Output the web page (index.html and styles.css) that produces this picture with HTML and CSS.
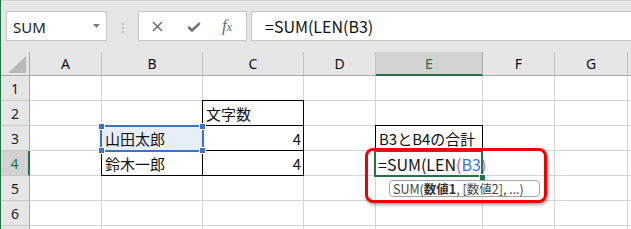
FILE: index.html
```html
<!DOCTYPE html>
<html lang="ja">
<head>
<meta charset="utf-8">
<title>Excel SUM LEN</title>
<link rel="stylesheet" href="styles.css">
</head>
<body>
<div class="app">
  <div class="toolbar">
    <div class="namebox">
      <span class="name">SUM</span>
      <svg class="dd" width="7" height="4" viewBox="0 0 7 4"><path d="M0 0 H7 L3.5 4 Z" fill="#7a7a7a"/></svg>
    </div>
    <div class="grip"><i></i><i></i><i></i></div>
    <div class="fbtns">
      <svg class="ic-x" width="11" height="11" viewBox="0 0 11 11"><path d="M1 1 L10 10 M10 1 L1 10" stroke="#6e6e6e" stroke-width="1.5" fill="none"/></svg>
      <svg class="ic-ok" width="14" height="10" viewBox="0 0 14 10"><path d="M1.2 5 L5 8.5 L12.8 1.2" stroke="#6e6e6e" stroke-width="2.4" fill="none"/></svg>
      <span class="fx"><i>f</i><em>x</em></span>
    </div>
    <div class="fbar">=SUM(LEN(B3)</div>
  </div>
  <div class="sheet">
    <div class="grid">
      <div class="ch corner"><svg width="18" height="17" viewBox="0 0 18 17"><path d="M18 0 V17 H0 Z" fill="#b9b9b9"/></svg></div>
      <div class="ch">A</div><div class="ch">B</div><div class="ch">C</div><div class="ch">D</div>
      <div class="ch on">E</div><div class="ch">F</div><div class="ch">G</div><div class="ch last"></div>

      <div class="rh">1</div><div class="c"></div><div class="c"></div><div class="c"></div><div class="c"></div><div class="c"></div><div class="c"></div><div class="c"></div><div class="c last"></div>

      <div class="rh">2</div><div class="c"></div><div class="c"></div><div class="c bd">文字数</div><div class="c"></div><div class="c"></div><div class="c"></div><div class="c"></div><div class="c last"></div>

      <div class="rh">3</div><div class="c"></div>
      <div class="c bd sel">山田太郎<span class="rf"><b class="h tl"></b><b class="h tr"></b><b class="h bl"></b><b class="h br"></b></span></div>
      <div class="c bd num">4</div><div class="c"></div><div class="c bd">B3とB4の合計</div><div class="c"></div><div class="c"></div><div class="c last"></div>

      <div class="rh on">4</div><div class="c"></div><div class="c bd">鈴木一郎</div><div class="c bd num">4</div><div class="c"></div>
      <div class="c edit">=SUM(LEN<span class="p1">(</span><span class="ref">B3</span><span class="p1">)</span></div>
      <div class="c"></div><div class="c"></div><div class="c last"></div>

      <div class="rh">5</div><div class="c"></div><div class="c"></div><div class="c"></div><div class="c"></div><div class="c"></div><div class="c"></div><div class="c"></div><div class="c last"></div>

      <div class="rh">6</div><div class="c"></div><div class="c"></div><div class="c"></div><div class="c"></div><div class="c"></div><div class="c"></div><div class="c"></div><div class="c last"></div>

      <div class="rh"></div><div class="c"></div><div class="c"></div><div class="c"></div><div class="c"></div><div class="c"></div><div class="c"></div><div class="c"></div><div class="c last"></div>
    </div>
    <span class="fillh"></span>
    <div class="tip">SUM(<b>数値1</b>, [数値2], ...)</div>
    <div class="callout"></div>
  </div>
</div>
</body>
</html>
```

FILE: styles.css
```css
html, body {
  margin: 0;
  padding: 0;
  background: #ffffff;
}

.app {
  width: 630px;
  height: 229px;
  overflow: hidden;
  border-left: 1px solid #217346;
  background: #e6e6e6;
  font-family: "Noto Sans", "Noto Sans CJK JP", sans-serif;
}

/* ---------- toolbar ---------- */
.toolbar {
  height: 52px;
  box-sizing: border-box;
  padding: 11px 0 0 5px;
  display: flex;
  align-items: flex-start;
  border-top: 1px solid #d0d0d0;
  box-shadow: inset 0 1px 0 #f2f2f2;
}

.toolbar > * {
  margin-top: -1px;
}

.namebox {
  width: 101px;
  height: 30px;
  box-sizing: border-box;
  background: #fff;
  border: 1px solid #c6c6c6;
  display: flex;
  align-items: center;
  padding: 0 6px 0 6px;
}

.name {
  flex: 1;
  font-family: "Noto Sans", sans-serif;
  font-size: 15px;
  color: #222;
  padding-top: 1px;
}

.dd {
  display: block;
  margin-top: -1px;
}

.grip {
  width: 2px;
  margin: 0 14px 0 15px;
  padding-top: 11px;
  display: flex;
  flex-direction: column;
  gap: 2px;
}

.grip i {
  display: block;
  width: 2px;
  height: 2px;
  background: #bdbdbd;
}

.fbtns {
  width: 109px;
  height: 30px;
  box-sizing: border-box;
  background: #fff;
  border: 1px solid #c6c6c6;
  display: flex;
  align-items: center;
  padding-left: 13px;
}

.ic-x {
  display: block;
}

.ic-ok {
  display: block;
  margin-left: 24px;
  margin-top: 2px;
}

.fx {
  margin-left: 21px;
  font-family: "Liberation Serif", serif;
  color: #6a6a6a;
  font-size: 17px;
  line-height: 1;
  padding-bottom: 2px;
}

.fx i {
  font-style: italic;
}

.fx em {
  font-style: italic;
  font-size: 12px;
}

.fbar {
  flex: 1;
  margin-left: 4px;
  height: 30px;
  box-sizing: border-box;
  background: #fff;
  border: 1px solid #c6c6c6;
  border-right: none;
  padding-left: 13px;
  font-family: "Noto Sans CJK JP", sans-serif;
  font-size: 16px;
  line-height: 28px;
  color: #111;
  white-space: nowrap;
}

/* ---------- sheet ---------- */
.sheet {
  position: relative;
  background: #fff;
}

.grid {
  display: grid;
  grid-template-columns: 29px 72px 101px 101px 72px 107px 72px 73px 1fr;
  grid-template-rows: 24px;
  grid-auto-rows: 25px;
}

.grid > div {
  box-sizing: border-box;
  min-width: 0;
}

.ch {
  background: #e6e6e6;
  border-right: 1px solid #c2c2c2;
  border-bottom: 1px solid #a8a8a8;
  text-align: center;
  font-family: "Noto Sans", sans-serif;
  font-size: 14px;
  line-height: 24px;
  color: #111;
}

.ch.on {
  background: #d2d2d2;
  border-right-color: #ababab;
  border-bottom: 2px solid #217346;
  color: #217346;
}

.corner {
  border-right-color: #a8a8a8;
  display: flex;
  align-items: flex-end;
  justify-content: flex-end;
  padding: 0 3px 2px 0;
}

.corner svg {
  display: block;
}

.rh {
  background: #e6e6e6;
  border-right: 1px solid #a8a8a8;
  border-bottom: 1px solid #c8c8c8;
  text-align: center;
  font-family: "Noto Sans", sans-serif;
  font-size: 14px;
  line-height: 25px;
  color: #222;
}

.rh.on {
  background: #d2d2d2;
  border-right: 2px solid #217346;
  color: #217346;
}

.c {
  border-right: 1px solid #d4d4d4;
  border-bottom: 1px solid #d4d4d4;
  font-family: "Noto Sans CJK JP", sans-serif;
  font-size: 15px;
  line-height: 24px;
  padding: 1px 3px 0 3px;
  color: #111;
  white-space: nowrap;
}

.c.last,
.ch.last {
  border-right: none;
}

.num {
  text-align: right;
  padding-right: 2px;
}

.bd {
  position: relative;
}

.bd::before {
  content: "";
  position: absolute;
  top: -1px;
  left: -1px;
  right: -1px;
  bottom: -1px;
  border: 1px solid #000;
  pointer-events: none;
}

.sel {
  background: #e8eef8;
}

.rf {
  position: absolute;
  top: -1px;
  left: -2px;
  right: -2px;
  bottom: -2px;
  border: 2px solid #3b73c9;
  z-index: 2;
}

.h {
  position: absolute;
  width: 5px;
  height: 5px;
  background: #3b73c9;
  border: 1px solid #fff;
}

.h.tl { left: -4px; top: -4px; }
.h.tr { right: -4px; top: -4px; }
.h.bl { left: -4px; bottom: -4px; }
.h.br { right: -4px; bottom: -4px; }

.edit {
  position: relative;
  font-size: 16px;
  padding-left: 2px;
  overflow: visible;
  z-index: 1;
}

.edit::after {
  content: "";
  position: absolute;
  top: -1px;
  left: -2px;
  right: -1px;
  bottom: -2px;
  border: 2px solid #217346;
}

.p1 {
  color: #e0507a;
}

.ref {
  color: #3a78d8;
}

/* ---------- overlays ---------- */
.fillh {
  position: absolute;
  left: 478px;
  top: 122px;
  width: 5px;
  height: 5px;
  background: #217346;
  border: 1px solid #fff;
  z-index: 3;
}

.tip {
  position: absolute;
  left: 388px;
  top: 128px;
  width: 151px;
  height: 17px;
  box-sizing: border-box;
  border: 1px solid #a3a3a3;
  border-radius: 4px;
  background: #fff;
  font-family: "Noto Sans CJK JP", sans-serif;
  font-size: 12.5px;
  line-height: 15px;
  color: #444;
  padding-left: 3px;
  white-space: nowrap;
  z-index: 4;
}

.tip b {
  font-weight: 700;
  color: #333;
}

.callout {
  position: absolute;
  left: 364px;
  top: 96px;
  width: 182px;
  height: 55px;
  box-sizing: border-box;
  border: 3px solid #f20000;
  border-radius: 8px;
  box-shadow: 1px 2px 3px rgba(0, 0, 0, 0.35);
  z-index: 5;
}
```
